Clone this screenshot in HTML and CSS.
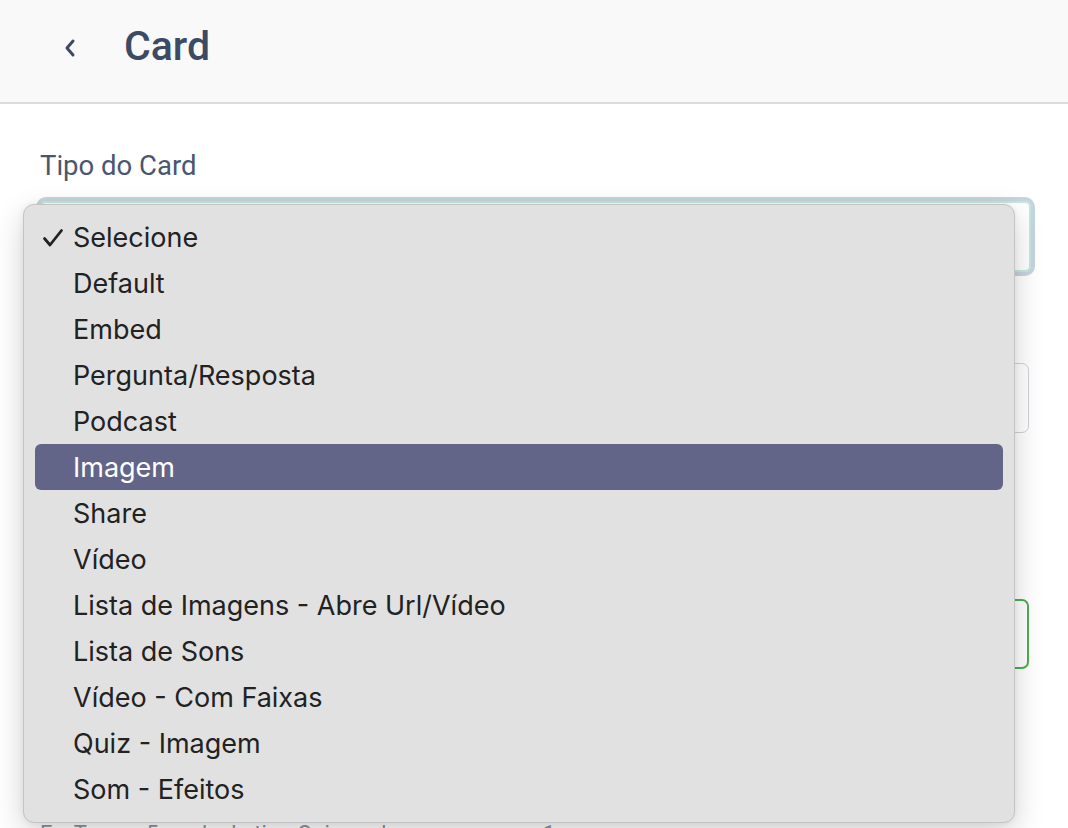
FILE: index.html
```html
<!DOCTYPE html>
<html lang="pt">
<head>
<meta charset="utf-8">
<title>Card</title>
<link rel="stylesheet" href="styles.css">
</head>
<body>
<header class="topbar">
  <button class="back" aria-label="Voltar">
    <svg width="14" height="20" viewBox="0 0 14 20"><path d="M10 3 L4 10 L10 17" fill="none" stroke="#3d4a63" stroke-width="3" stroke-linecap="round" stroke-linejoin="round"/></svg>
  </button>
  <h1 class="title">Card</h1>
</header>
<main class="content">
  <div class="field">
    <label class="label">Tipo do Card</label>
    <div class="select focused"></div>
  </div>
  <div class="field second">
    <div class="input"></div>
  </div>
  <div class="field third">
    <div class="input valid"></div>
  </div>
  <p class="help">Ex: Temos 5 cards do tipo Quiz, cada um com peso 1...</p>

  <ul class="menu">
    <li class="opt checked"><svg class="check" width="22" height="20" viewBox="0 0 22 20"><path d="M2.5 10.5 L8 17 L19.5 2.5" fill="none" stroke="#222" stroke-width="2.8" stroke-linecap="round" stroke-linejoin="round"/></svg>Selecione</li>
    <li class="opt">Default</li>
    <li class="opt">Embed</li>
    <li class="opt">Pergunta/Resposta</li>
    <li class="opt">Podcast</li>
    <li class="opt active">Imagem</li>
    <li class="opt">Share</li>
    <li class="opt">Vídeo</li>
    <li class="opt">Lista de Imagens - Abre Url/Vídeo</li>
    <li class="opt">Lista de Sons</li>
    <li class="opt">Vídeo - Com Faixas</li>
    <li class="opt">Quiz - Imagem</li>
    <li class="opt">Som - Efeitos</li>
  </ul>
</main>
</body>
</html>
```

FILE: styles.css
```css
* { box-sizing: border-box; }
html, body { margin: 0; padding: 0; }
body {
  background: #ffffff;
  font-family: Roboto, "Liberation Sans", sans-serif;
  width: 1068px;
  height: 828px;
  overflow: hidden;
}
.topbar {
  height: 104px;
  background: #f9f9f9;
  border-bottom: 2px solid #dcdce0;
  display: flex;
  align-items: center;
  padding-left: 60px;
}
.back {
  background: none;
  border: 0;
  padding: 0;
  width: 20px;
  height: 20px;
  display: flex;
  align-items: center;
  justify-content: center;
  margin-right: 44px;
  margin-top: -6px;
}
.title {
  margin: 0;
  font-size: 41px;
  font-weight: 500;
  color: #3d4a63;
  margin-top: -10px;
}
.content {
  position: relative;
  padding: 46px 39px 0 40px;
}
.label {
  display: block;
  font-size: 27.5px;
  color: #4a5670;
  line-height: 32px;
  margin-bottom: 15px;
}
.select {
  height: 79px;
  margin-left: -4px;
  margin-right: -6px;
  border: 4px solid #c6d4dd;
  border-radius: 10px;
  box-shadow: inset 0 0 0 2px #c4e8de;
  background: #fff;
}
.input {
  height: 70px;
  border: 1px solid #d0d0d8;
  border-radius: 7px;
  background: #fff;
}
.field.second { margin-top: 87px; }
.field.third { margin-top: 166px; }
.input.valid { border: 2px solid #4caf50; }
.help {
  margin: 152px 0 0;
  font-size: 22px;
  color: #8a909c;
}
.menu {
  position: absolute;
  left: 23px;
  top: 100px;
  width: 992px;
  height: 619px;
  margin: 0;
  padding: 9px 11px 11px;
  list-style: none;
  background: #e1e1e1;
  border: 1px solid #c4c4c4;
  border-radius: 11px;
  box-shadow: 0 10px 30px rgba(0,0,0,0.18), 0 0 6px rgba(0,0,0,0.06);
  font-family: Inter, "Noto Sans", sans-serif;
}
.opt {
  position: relative;
  height: 46px;
  line-height: 48px;
  padding-left: 38px;
  font-size: 27px;
  color: #222222;
  border-radius: 6px;
}
.opt.active {
  background: #636588;
  color: #ffffff;
}
.check {
  position: absolute;
  left: 7px;
  top: 14px;
}
```
